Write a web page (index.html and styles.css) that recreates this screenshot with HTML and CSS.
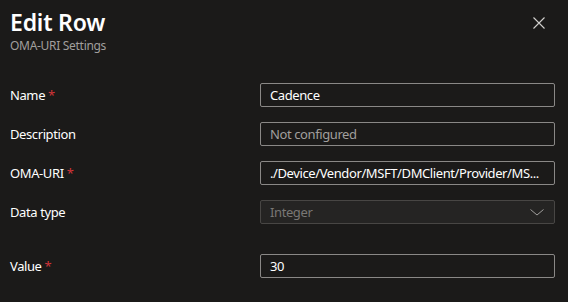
FILE: index.html
```html
<!DOCTYPE html>
<html>
<head>
<meta charset="utf-8">
<link rel="stylesheet" href="styles.css">
</head>
<body>
<div class="panel">
  <header class="head">
    <div class="titles">
      <h1 class="title">Edit Row</h1>
      <div class="subtitle">OMA-URI Settings</div>
    </div>
    <button class="close" aria-label="Close">
      <svg width="12" height="12" viewBox="0 0 12 12"><path d="M0.5 0.5 L11.5 11.5 M11.5 0.5 L0.5 11.5" stroke="#d2d0ce" stroke-width="1.1" fill="none"/></svg>
    </button>
  </header>
  <div class="form">
    <div class="row">
      <label class="label">Name <span class="req">*</span></label>
      <div class="field"><span class="val">Cadence</span></div>
    </div>
    <div class="row">
      <label class="label">Description</label>
      <div class="field"><span class="val placeholder">Not configured</span></div>
    </div>
    <div class="row">
      <label class="label">OMA-URI <span class="req">*</span></label>
      <div class="field"><span class="val">./Device/Vendor/MSFT/DMClient/Provider/MS...</span></div>
    </div>
    <div class="row">
      <label class="label">Data type</label>
      <div class="field disabled"><span class="val">Integer</span>
        <svg class="chev" width="14" height="7" viewBox="0 0 14 7"><path d="M0.5 0.5 L7 6 L13.5 0.5" stroke="#a19f9d" stroke-width="1" fill="none"/></svg>
      </div>
    </div>
    <div class="row value-row">
      <label class="label">Value <span class="req">*</span></label>
      <div class="field"><span class="val">30</span></div>
    </div>
  </div>
</div>
</body>
</html>
```
FILE: styles.css
```css
html, body {
  margin: 0;
  padding: 0;
  background: #1b1a19;
}
body {
  font-family: "Segoe UI", "Noto Sans", "Open Sans", sans-serif;
  color: #ffffff;
  width: 568px;
  height: 302px;
  overflow: hidden;
}
.panel {
  padding: 6px 13px 0 10px;
}
.head {
  display: flex;
  justify-content: space-between;
  align-items: flex-start;
}
.title {
  margin: 0;
  font-size: 23px;
  font-weight: 600;
  line-height: 32px;
  color: #ffffff;
  letter-spacing: -0.2px;
}
.subtitle {
  font-size: 12px;
  line-height: 16px;
  color: #a19f9d;
  letter-spacing: -0.3px;
}
.close {
  background: none;
  border: none;
  padding: 0;
  margin: 11px 10px 0 0;
  width: 12px;
  height: 12px;
  display: flex;
}
.form {
  margin-top: 29px;
  display: flex;
  flex-direction: column;
  gap: 15px;
}
.row {
  display: grid;
  grid-template-columns: 250px 295px;
  align-items: center;
  height: 24px;
}
.value-row {
  margin-top: 15px;
}
.label {
  font-size: 13px;
  letter-spacing: -0.4px;
  color: #ffffff;
}
.req {
  color: #d13438;
}
.field {
  box-sizing: border-box;
  height: 24px;
  border: 1px solid #8a8886;
  border-radius: 2px;
  display: flex;
  align-items: center;
  padding: 0 9px;
  font-size: 13px;
  letter-spacing: -0.4px;
  overflow: hidden;
}
.val {
  white-space: nowrap;
  flex: 1;
  min-width: 0;
}
.placeholder {
  color: #a19f9d;
}
.disabled {
  background: #252423;
  border-color: #484644;
  color: #797775;
}
.chev {
  flex: none;
  margin-right: 1px;
}
```
